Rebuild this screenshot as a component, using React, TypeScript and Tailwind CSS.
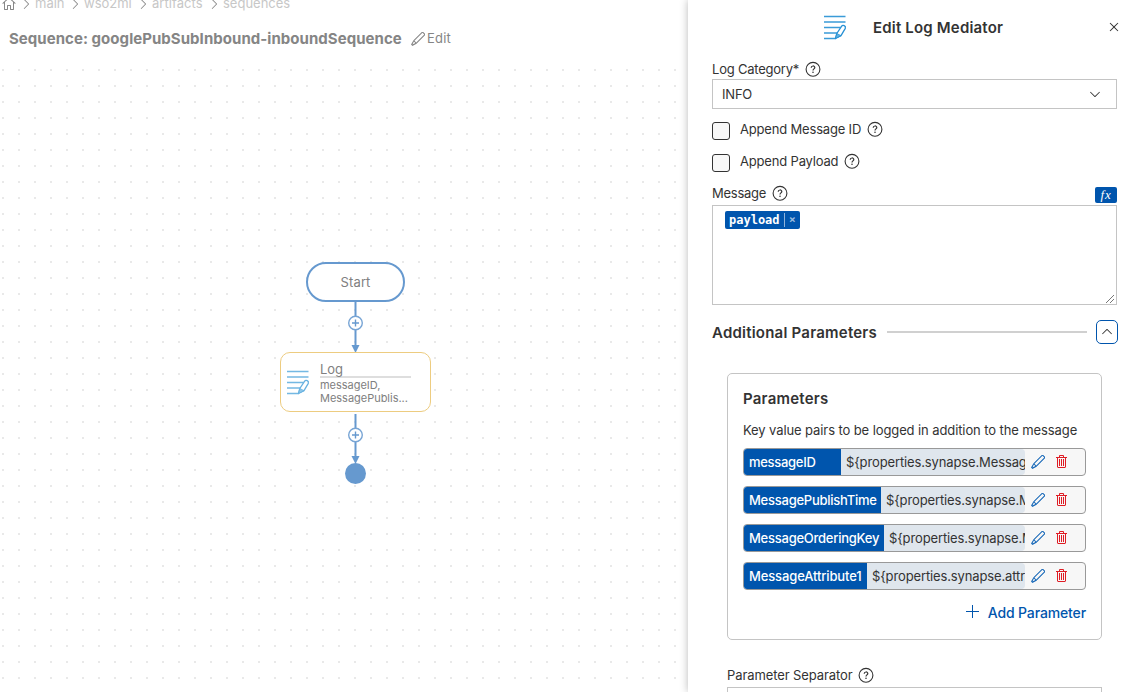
import type { ReactNode } from 'react';
import {
  VscHome,
  VscChevronRight,
  VscChevronDown,
  VscChevronUp,
  VscClose,
  VscEdit,
  VscTrash,
  VscAdd,
} from 'react-icons/vsc';

const crumbs = [
  { label: 'main', className: 'w-[30px]' },
  { label: 'wso2mi', className: 'w-[49px]' },
  { label: 'artifacts', className: 'w-[52px] tracking-[0.05px]' },
  { label: 'sequences', className: 'w-[68px]' },
];

const parameters = [
  { name: 'messageID', value: '${properties.synapse.MessageId}', width: 'w-[97px]', tracking: 'tracking-[-0.3px]' },
  { name: 'MessagePublishTime', value: '${properties.synapse.MessagePublishTime}', width: 'w-[137px]', tracking: 'tracking-[-0.25px]' },
  { name: 'MessageOrderingKey', value: '${properties.synapse.MessageOrderingKey}', width: 'w-[140px]', tracking: 'tracking-[-0.25px]' },
  { name: 'MessageAttribute1', value: '${properties.synapse.attribute1}', width: 'w-[123px]', tracking: 'tracking-[-0.13px]' },
];

function LogIcon({ className }: { className: string }) {
  return (
    <svg viewBox="0 0 24 24" fill="none" className={className}>
      <path d="M1 1H22.5M1 6.5H22.5M1 12H17.5M1 17.5H14.5M1 23H13" stroke="#3a9bd8" strokeWidth="1.5" />
      <path d="M12.5 23L13.8 18L18.5 10.8C19.8 9 23.1 10.3 22.3 12.8L18 20.2Z" fill="#fff" stroke="#2690d4" strokeWidth="1.3" strokeLinejoin="round" />
      <path d="M13.8 18L18 20.2L12.5 23Z" fill="#5fb0e0" stroke="#2690d4" strokeWidth="0.8" />
    </svg>
  );
}

function Help() {
  return (
    <svg viewBox="0 0 16 16" fill="none" className="h-4 w-4 shrink-0">
      <circle cx="8" cy="8.3" r="6.9" stroke="#333" strokeWidth="1.1" />
      <path d="M6.2 6.8C6.2 4.4 9.8 4.4 9.8 6.6C9.8 7.9 8 7.9 8 9.5" stroke="#333" strokeWidth="1.2" />
      <circle cx="8" cy="11.3" r="0.8" fill="#333" />
    </svg>
  );
}

function Label({ children, className = '' }: { children: ReactNode; className?: string }) {
  return (
    <div className="flex h-4 items-center gap-[6px] text-[13px] leading-4 whitespace-nowrap">
      <span className={className}>{children}</span>
      <Help />
    </div>
  );
}

function Check({ children }: { children: ReactNode }) {
  return (
    <div className="flex h-5 items-start gap-[10px]">
      <span className="mt-[1px] h-[18px] w-[18px] rounded-[3px] border border-[#333] bg-[#f8f8f8]" />
      <Label className="tracking-[-0.18px]">{children}</Label>
    </div>
  );
}

function Connector({ className, height }: { className: string; height: number }) {
  return (
    <svg width="17" height={height} viewBox={`0 0 17 ${height}`} fill="none" className={className}>
      <path d={`M8.5 0V${height - 6}`} stroke="#6699cf" strokeWidth="2" />
      <path d={`M4.5 ${height - 8}H12.5L8.5 ${height}Z`} fill="#6699cf" />
      <circle cx="8.5" cy="21" r="6.8" fill="#fff" stroke="#78a5d5" strokeWidth="1.4" />
      <path d="M5 21H12M8.5 17.5V24.5" stroke="#6699cf" strokeWidth="1.4" />
    </svg>
  );
}

function Diagram() {
  return (
    <div className="relative min-h-0 flex-1 bg-[radial-gradient(circle,#e9e9e9_1px,transparent_1.3px)] bg-[length:16px_16px] bg-[position:-5px_0px]">
      <div className="absolute top-[200px] left-[306px] flex h-10 w-[99px] items-center justify-center rounded-full border-2 border-[#6699cf] bg-white pt-[2px] text-[13px] tracking-[0.15px] text-[#808080]">
        Start
      </div>
      <Connector height={51} className="absolute top-[240px] left-[347px]" />
      <div className="absolute top-[290px] left-[280px] flex h-[60px] w-[151px] rounded-[10px] border border-[#edcc80] bg-white">
        <LogIcon className="mt-[17px] ml-[5px] h-[25px] w-6 opacity-70" />
        <div className="mt-[9px] ml-[10px] text-[#808080]">
          <div className="h-4 w-[91px] border-b-2 border-[#dedede] text-[13px] leading-[15px] tracking-[-0.1px]">Log</div>
          <div className="mt-[1px] text-[11px] leading-[13px] tracking-[-0.02px]">messageID,<br />MessagePublis...</div>
        </div>
      </div>
      <Connector height={50} className="absolute top-[352px] left-[347px]" />
      <div className="absolute top-[401px] left-[345px] h-[21px] w-[21px] rounded-full bg-[#6699cf]" />
    </div>
  );
}

export default function App() {
  return (
    <div className="flex h-[692px] w-[1129px] overflow-hidden bg-white font-[Inter,sans-serif] text-[13px] text-[#333]">
      <main className="flex min-w-0 flex-1 flex-col overflow-hidden">
        <div className="-mt-[6px] flex h-5 items-center pl-[1px] text-[13px] whitespace-nowrap text-[#c7c7c7]">
          <VscHome className="-mr-[1px] h-4 w-4 text-[#888]" />
          {crumbs.map((crumb) => (
            <div key={crumb.label} className="flex items-center">
              <VscChevronRight className="mr-[1px] ml-[2px] h-4 w-4 text-[#888]" />
              <span className={crumb.className}>{crumb.label}</span>
            </div>
          ))}
        </div>
        <div className="mt-[14px] flex h-[21px] items-center pl-[9px] whitespace-nowrap text-[#858585]">
          <h1 className="w-[393px] pt-[2px] text-[15px] font-bold tracking-[0.045px]">Sequence: googlePubSubInbound-inboundSequence</h1>
          <VscEdit className="ml-2 h-4 w-4" />
          <span className="ml-[1px] text-[13px] tracking-[0.2px]">Edit</span>
        </div>
        <div className="h-[13px]" />
        <Diagram />
      </main>

      <aside className="relative flex w-[441px] shrink-0 flex-col bg-white pr-3 pl-6 shadow-[0_0_8px_rgba(0,0,0,0.28)]">
        <header className="flex h-[55px] shrink-0 items-center">
          <LogIcon className="ml-[111px] h-[25px] w-6" />
          <h2 className="ml-[26px] pt-[2px] text-[15px] font-semibold tracking-[0.18px]">Edit Log Mediator</h2>
          <VscClose className="-mr-[5px] mb-[1px] ml-auto h-4 w-4" />
        </header>
        <div className="mt-[6px]"><Label className="tracking-[-0.22px]">Log Category*</Label></div>
        <div className="mt-[2px] flex h-[30px] shrink-0 items-center justify-between border border-[#c4c4c4] pr-[13px] pl-[9px]">
          <span className="pt-[2px] tracking-[-0.2px]">INFO</span>
          <VscChevronDown className="h-4 w-4" />
        </div>
        <div className="mt-3 flex shrink-0 flex-col gap-3">
          <Check>Append Message ID</Check>
          <Check>Append Payload</Check>
        </div>
        <div className="mt-3 flex h-5 shrink-0 items-start justify-between">
          <Label className="tracking-[-0.25px]">Message</Label>
          <span className="mt-[2px] flex h-4 w-[22px] items-center justify-center rounded-[2px] bg-[#0055ad] font-['Liberation_Serif',serif] text-[13px] tracking-[0.8px] italic text-white">fx</span>
        </div>
        <div className="relative h-[100px] shrink-0 border border-[#c4c4c4] pt-[5px] pl-3">
          <span className="flex h-[18px] w-[75px] items-center rounded-[2px] bg-[#0055ad] pl-1 font-['DejaVu_Sans_Mono',monospace] text-[12px] font-bold text-white">
            <span className="w-[51px]">payload</span>
            <span className="ml-1 h-[14px] w-px bg-[#8fb3da]" />
            <span className="ml-1 text-[11px] text-[#9abbdf]">×</span>
          </span>
          <svg viewBox="0 0 9 9" className="absolute right-px bottom-0 h-[9px] w-[9px]" fill="none">
            <path d="M0 8L8 0M4 8L8 4" stroke="#777" />
          </svg>
        </div>
        <div className="mt-[15px] flex h-6 shrink-0 items-center">
          <h3 className="w-[175px] pt-[2px] text-[15px] font-semibold tracking-[0.22px] whitespace-nowrap">Additional Parameters</h3>
          <div className="mr-[9px] h-[2px] flex-1 bg-[#d0d0d0]" />
          <button className="-mr-[1px] flex h-6 w-[22px] items-center justify-center rounded-[5px] border border-[#0055ad]">
            <VscChevronUp className="h-4 w-4" />
          </button>
        </div>
        <section className="mt-[29px] mr-[15px] ml-[15px] flex h-[267px] shrink-0 flex-col rounded-[5px] border border-[#c4c4c4] px-[15px]">
          <h4 className="mt-4 text-[15px] leading-[18px] font-semibold tracking-[0.22px]">Parameters</h4>
          <p className="mt-[14px] leading-4 tracking-[-0.1px] whitespace-nowrap">Key value pairs to be logged in addition to the message</p>
          <div className="mt-[10px] flex flex-col gap-[10px]">
            {parameters.map((p) => (
              <div key={p.name} className="flex h-7 items-center overflow-hidden rounded-[4px] border border-[#999] bg-[#f7f7f7]">
                <div className="flex h-full w-[281px] shrink-0 overflow-hidden rounded-r-[4px] bg-[#dfe6ed] leading-[27px]">
                  <div className={`${p.width} ${p.tracking} shrink-0 bg-[#0055ad] pl-[5px] font-medium text-white`}>{p.name}</div>
                  <div className="pl-[5px] tracking-[-0.13px] whitespace-nowrap">{p.value}</div>
                </div>
                <VscEdit className="ml-[5px] h-4 w-4 shrink-0 text-[#1768b8]" />
                <VscTrash className="ml-2 h-4 w-4 shrink-0 text-[#df1c24]" />
              </div>
            ))}
          </div>
          <div className="mt-[14px] flex items-center justify-end text-[14px] leading-[18px] font-medium tracking-[-0.13px] text-[#0055ad]">
            <VscAdd className="mr-[7px] mb-[2px] h-4 w-4" />
            Add Parameter
          </div>
        </section>
        <div className="mt-[27px] ml-[15px]"><Label className="tracking-[-0.1px]">Parameter Separator</Label></div>
        <div className="mt-1 mr-[15px] ml-[15px] h-7 shrink-0 border border-[#c4c4c4]" />
      </aside>
    </div>
  );
}
